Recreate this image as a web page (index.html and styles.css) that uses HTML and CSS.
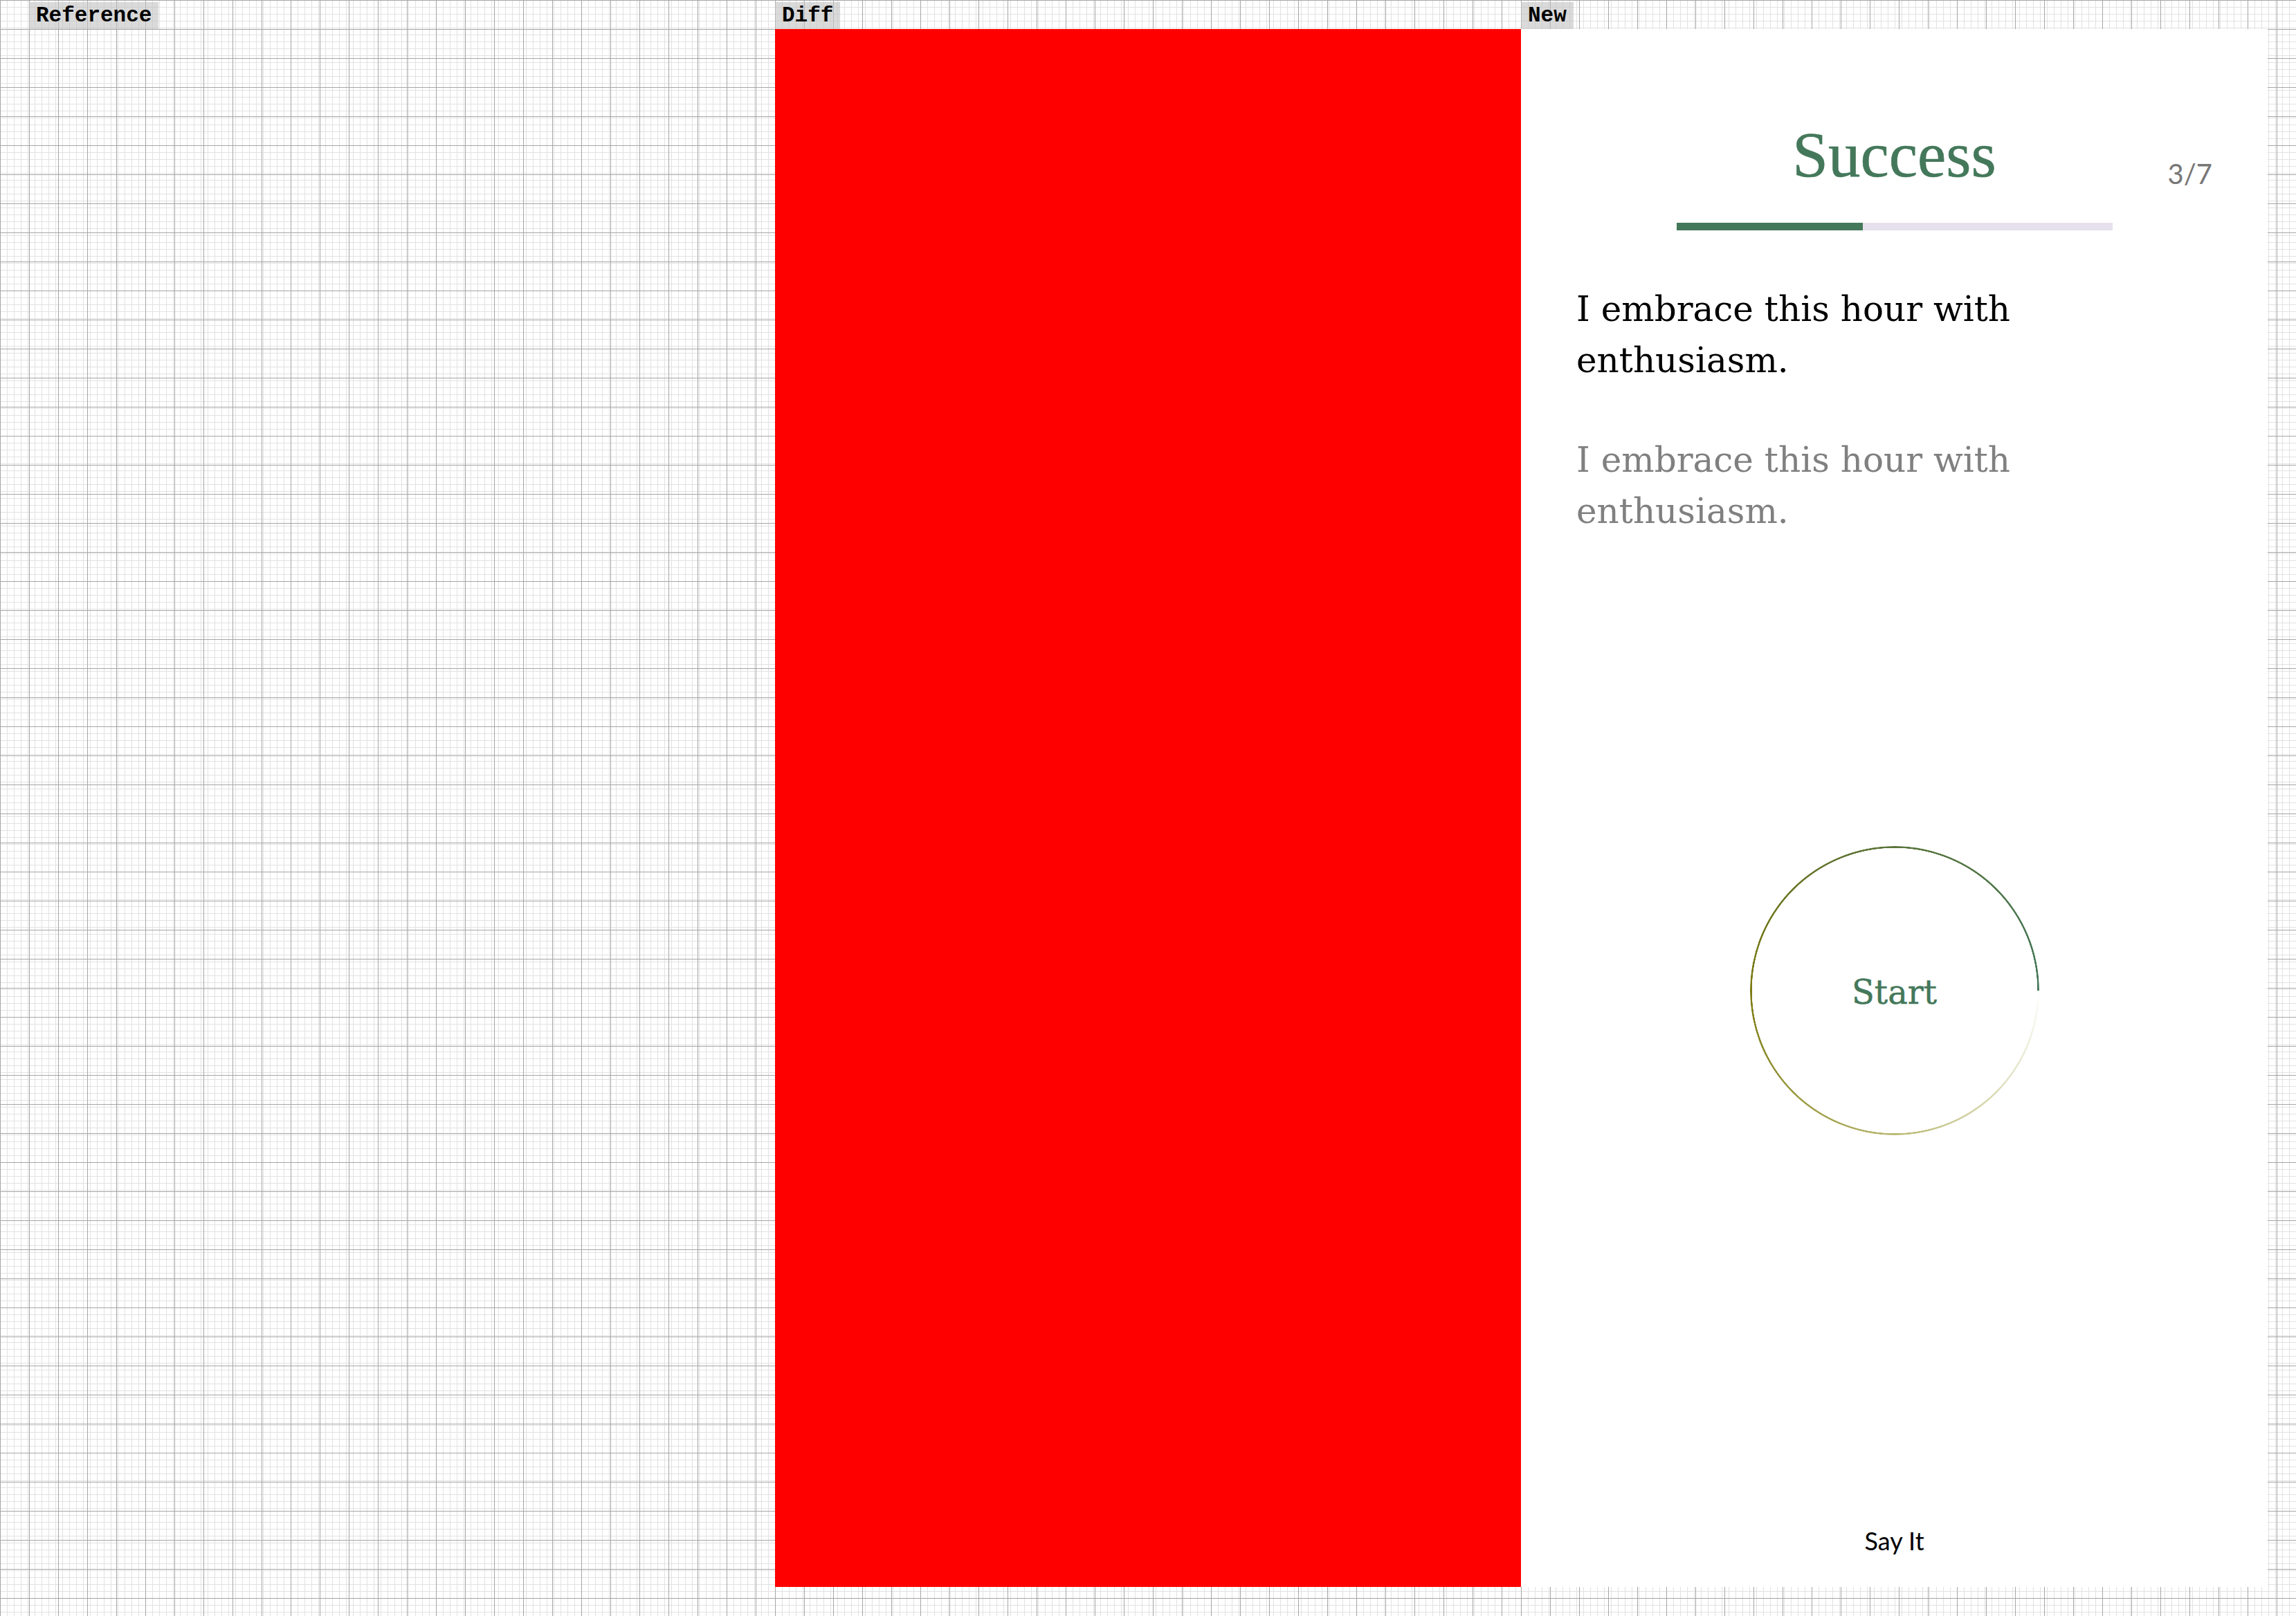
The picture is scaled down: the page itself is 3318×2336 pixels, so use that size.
FILE: index.html
```html
<!DOCTYPE html>
<html lang="en">
<head>
<meta charset="utf-8">
<title>Compare</title>
<link rel="stylesheet" href="styles.css">
</head>
<body>
<div class="sheet">
  <section class="col col-first">
    <div class="tag-row"><span class="tag">Reference</span></div>
    <div class="pane pane-ref"></div>
  </section>
  <section class="col">
    <div class="tag-row"><span class="tag">Diff</span></div>
    <div class="pane pane-diff"></div>
  </section>
  <section class="col col-last">
    <div class="tag-row"><span class="tag">New</span></div>
    <main class="pane app">
      <header class="app-head">
        <span class="app-spacer"></span>
        <h1 class="app-title">Success</h1>
        <span class="app-count">3/7</span>
      </header>
      <div class="progress"><div class="progress-fill" style="width:42.857%"></div></div>
      <p class="affirm">I embrace this hour with enthusiasm.</p>
      <p class="affirm affirm-echo">I embrace this hour with enthusiasm.</p>
      <div class="ring"><span class="ring-label">Start</span></div>
      <footer class="say">Say It</footer>
    </main>
  </section>
</div>
</body>
</html>
```

FILE: styles.css
```css
html, body {
  margin: 0;
  padding: 0;
}

body {
  width: 3318px;
  height: 2336px;
  overflow: hidden;
  background: #fff;
}

.sheet {
  display: flex;
  width: 3318px;
  height: 2336px;
}

.col {
  display: flex;
  flex-direction: column;
  width: 1078px;
  flex: none;
  background-color: #fff;
  background-image:
    linear-gradient(90deg, #a6a6a6 1px, transparent 1px),
    linear-gradient(180deg, #a6a6a6 1px, transparent 1px),
    linear-gradient(90deg, #e2e2e2 1px, transparent 1px),
    linear-gradient(180deg, #e2e2e2 1px, transparent 1px);
  background-size: 42px 42px, 42px 42px, 10px 10px, 10px 10px;
}

.col-first {
  width: 1120px;
  padding-left: 42px;
  box-sizing: border-box;
}

.col-last {
  flex: 1;
}

.tag-row {
  height: 42px;
  display: flex;
  align-items: flex-end;
}

.tag {
  height: 39px;
  line-height: 39px;
  padding: 0 10px;
  font-family: "Liberation Mono", "Courier New", monospace;
  font-weight: 700;
  font-size: 31px;
  color: #000;
  background: rgba(196, 196, 196, 0.62);
}

.pane {
  height: 2252px;
  width: 1078px;
  box-sizing: border-box;
}

.pane-diff {
  background: #ff0000;
}

.app {
  width: 1079px;
  background: #fff;
  display: flex;
  flex-direction: column;
  padding: 131px 80px 45px;
}

.app-head {
  display: grid;
  grid-template-columns: 1fr auto 1fr;
  align-items: start;
  height: 102px;
}

.app-title {
  margin: 0;
  font-family: "Liberation Serif", "Times New Roman", serif;
  font-weight: 400;
  font-size: 93px;
  line-height: 102px;
  color: #44785a;
  -webkit-text-stroke: 0.6px #44785a;
}

.app-count {
  justify-self: end;
  margin-top: 58px;
  font-family: Lato, "Noto Sans", sans-serif;
  font-size: 40px;
  line-height: 40px;
  color: #777777;
}

.progress {
  width: 630px;
  height: 11px;
  margin: 47px auto 0;
  background: #e6dfec;
}

.progress-fill {
  height: 100%;
  background: #44785a;
}

.affirm {
  max-width: 760px;
  margin: 77px 0 0;
  font-family: "DejaVu Serif", "Liberation Serif", serif;
  font-size: 50px;
  line-height: 74px;
  color: #000;
}

.affirm-echo {
  margin-top: 70px;
  color: #808080;
}

.ring {
  position: relative;
  width: 418px;
  height: 418px;
  margin: 447px auto 0;
  padding-top: 4px;
  box-sizing: border-box;
  display: flex;
  align-items: center;
  justify-content: center;
  border-radius: 50%;
}

.ring::before {
  content: "";
  position: absolute;
  inset: 0;
  border-radius: 50%;
  background: conic-gradient(from 90deg, rgba(128, 128, 0, 0) 0%, rgba(128, 128, 0, 0.55) 25%, #7c7a10 50%, #5f7434 70%, #44785a 100%);
  -webkit-mask: radial-gradient(farthest-side, transparent calc(100% - 3px), #000 calc(100% - 2.5px));
  mask: radial-gradient(farthest-side, transparent calc(100% - 3px), #000 calc(100% - 2.5px));
}

.ring-label {
  position: relative;
  z-index: 1;
  font-family: "DejaVu Serif", "Liberation Serif", serif;
  font-size: 48px;
  color: #44785a;
  -webkit-text-stroke: 0.5px #44785a;
}

.say {
  margin-top: auto;
  text-align: center;
  font-family: Lato, "Noto Sans", sans-serif;
  font-size: 36px;
  color: #000;
}
```
